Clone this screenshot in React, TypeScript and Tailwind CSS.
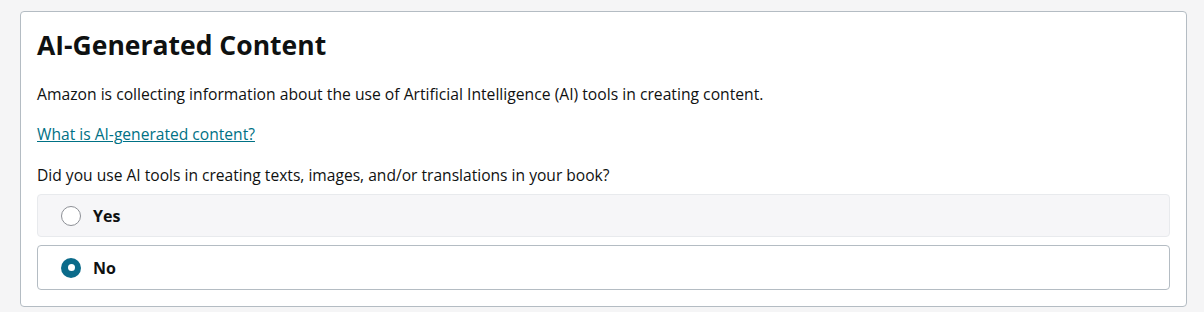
import { useState } from 'react'

const OPTIONS = [
  { value: 'yes', label: 'Yes' },
  { value: 'no', label: 'No' },
]

export default function App() {
  const [choice, setChoice] = useState('no')

  return (
    <div
      className="min-h-[312px] bg-[#f5f5f6] pl-[20px] pr-[17px] pt-[11px] text-[#0f1111]"
      style={{ fontFamily: '"Open Sans", "Noto Sans", sans-serif' }}
    >
      <div className="rounded-[4px] border border-[#b4bcc3] bg-white px-[16px] pb-[16px] pt-[15px]">
        <h1 className="text-[26.5px] font-bold leading-[36px]">AI-Generated Content</h1>

        <p className="mt-[21px] text-[15.7px] leading-[20px]">
          Amazon is collecting information about the use of Artificial Intelligence (AI) tools in creating content.
        </p>

        <a href="#" className="mt-[20px] inline-block text-[15.6px] leading-[20px] text-[#007185] underline">
          What is AI-generated content?
        </a>

        <p className="mt-[19px] text-[15.6px] leading-[20px]">
          Did you use AI tools in creating texts, images, and/or translations in your book?
        </p>

        <div className="mt-[9px] flex flex-col gap-[8px]">
          {OPTIONS.map((o) => {
            const selected = choice === o.value
            return (
              <button
                key={o.value}
                onClick={() => setChoice(o.value)}
                className={`flex items-center gap-[12px] rounded-[4px] border pl-[23px] text-left ${
                  selected
                    ? 'h-[45px] border-[#b4bcc3] bg-white'
                    : 'h-[43px] border-[#e8eaed] bg-[#f6f6f8]'
                }`}
              >
                {selected ? (
                  <span className="flex h-[20px] w-[20px] items-center justify-center rounded-full bg-[#0b6b8a]">
                    <span className="h-[7px] w-[7px] rounded-full bg-white" />
                  </span>
                ) : (
                  <span className="h-[20px] w-[20px] rounded-full border border-[#8d9096] bg-white" />
                )}
                <span className="text-[16px] font-bold">{o.label}</span>
              </button>
            )
          })}
        </div>
      </div>
    </div>
  )
}
